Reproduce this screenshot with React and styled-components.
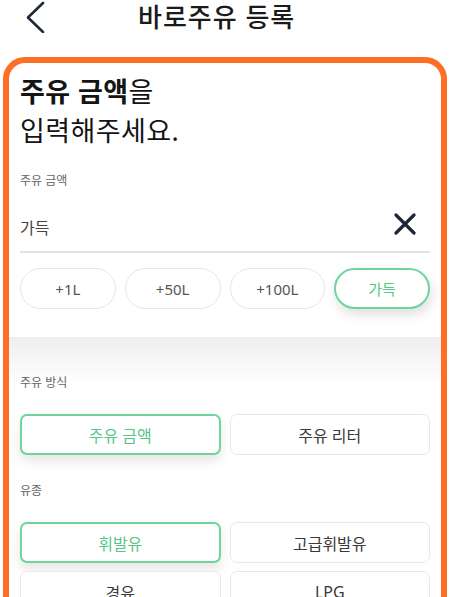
import React, { useState } from 'react'
import styled, { createGlobalStyle } from 'styled-components'

const GlobalStyle = createGlobalStyle`
    * {
        box-sizing: border-box;
    }
    body {
        margin: 0;
        background: #ffffff;
        font-family: "Noto Sans", "Noto Sans CJK KR", sans-serif;
        color: #222;
    }
`

const amountChips = ['+1L', '+50L', '+100L', '가득']
const methods = ['주유 금액', '주유 리터']
const fuels = ['휘발유', '고급휘발유', '경유', 'LPG']

const BackIcon = () => (
    <svg width="20" height="32" viewBox="0 0 20 32" fill="none">
        <polyline points="17,2 2,16.5 17,31" stroke="#1f2a3a" strokeWidth="2.6" strokeLinecap="round" strokeLinejoin="round" />
    </svg>
)

const ClearIcon = () => (
    <svg width="22" height="22" viewBox="0 0 22 22" fill="none">
        <path d="M2 2 L20 20 M20 2 L2 20" stroke="#1c2636" strokeWidth="3.2" strokeLinecap="round" />
    </svg>
)

const App = () => {

    const [chip, setChip] = useState('가득')
    const [method, setMethod] = useState('주유 금액')
    const [fuel, setFuel] = useState('휘발유')

    return (
        <Page>
            <GlobalStyle />
            <Header>
                <BackButton aria-label="back">
                    <BackIcon />
                </BackButton>
                <Title>바로주유 등록</Title>
            </Header>
            <Card>
                <AmountSection>
                    <Headline>
                        <strong>주유 금액</strong>을<br />
                        입력해주세요.
                    </Headline>
                    <Label>주유 금액</Label>
                    <InputRow>
                        <InputValue>{chip}</InputValue>
                        <ClearButton aria-label="clear">
                            <ClearIcon />
                        </ClearButton>
                    </InputRow>
                    <ChipRow>
                        {amountChips.map((c) => (
                            <Chip key={c} $active={chip === c} onClick={() => setChip(c)}>
                                {c}
                            </Chip>
                        ))}
                    </ChipRow>
                </AmountSection>
                <OptionSection>
                    <Label $first>주유 방식</Label>
                    <OptionGrid>
                        {methods.map((m) => (
                            <Option key={m} $active={method === m} onClick={() => setMethod(m)}>
                                {m}
                            </Option>
                        ))}
                    </OptionGrid>
                    <Label $gap>유종</Label>
                    <OptionGrid>
                        {fuels.map((f) => (
                            <Option key={f} $active={fuel === f} onClick={() => setFuel(f)}>
                                {f}
                            </Option>
                        ))}
                    </OptionGrid>
                </OptionSection>
            </Card>
        </Page>
    )
}


const Page = styled.main`
    width: 450px;
    padding: 0 3px;
`

const Header = styled.header`
    height: 57px;
    display: flex;
    align-items: flex-start;
    padding-top: 1px;
    padding-left: 23px;
`

const BackButton = styled.button`
    border: none;
    background: none;
    padding: 0;
    width: 20px;
    height: 32px;
    display: flex;
    cursor: pointer;
`

const Title = styled.h1`
    margin: 0 0 0 92px;
    font-size: 26px;
    line-height: 32px;
    font-weight: 500;
    color: #1a1a1a;
    letter-spacing: 1px;
`

const Card = styled.section`
    border: 6px solid #fd6f22;
    border-radius: 22px;
    overflow: hidden;
    padding-bottom: 60px;
`

const AmountSection = styled.div`
    padding: 9px 11px 28px;
`

const Headline = styled.h2`
    margin: 0;
    font-size: 27px;
    line-height: 39px;
    font-weight: 400;
    letter-spacing: 0.4px;
    color: #141414;

    strong {
        font-weight: 700;
    }
`

const Label = styled.p`
    margin: ${(p) => (p.$first ? '0' : p.$gap ? '28px' : '23px')} 0 0;
    font-size: 12px;
    line-height: 16px;
    color: #666;
`

const InputRow = styled.div`
    margin-top: 17px;
    height: 47px;
    padding: 0 14px 5px 0;
    display: flex;
    align-items: center;
    justify-content: space-between;
    border-bottom: 2px solid #e3e3e3;
`

const InputValue = styled.span`
    font-size: 16px;
    color: #444;
    margin-top: 2px;
`

const ClearButton = styled.button`
    border: none;
    background: none;
    padding: 0;
    display: flex;
    margin-top: -4px;
    cursor: pointer;
`

const ChipRow = styled.div`
    margin-top: 15px;
    display: grid;
    grid-template-columns: repeat(4, 1fr);
    gap: 9px;
`

const Chip = styled.button`
    height: 41px;
    border-radius: 21px;
    background: #fff;
    font-family: "Noto Sans", "Noto Sans CJK KR", sans-serif;
    font-size: 15px;
    font-weight: 400;
    color: ${(p) => (p.$active ? '#55c688' : '#555')};
    border: ${(p) => (p.$active ? '2px solid #6dd49b' : '1.5px solid #e6e6e6')};
    box-shadow: ${(p) => (p.$active ? '2px 6px 12px rgba(0, 0, 0, 0.12)' : 'none')};
    cursor: pointer;
`

const OptionSection = styled.div`
    padding: 38px 11px 0;
    background: linear-gradient(to bottom, #eeeeee 0, #fbfbfb 36px, #ffffff 48px);
`

const OptionGrid = styled.div`
    margin-top: 23px;
    display: grid;
    grid-template-columns: 1fr 1fr;
    gap: 8px 9px;
`

const Option = styled.button`
    height: 41px;
    border-radius: 7px;
    background: #fff;
    font-family: "Noto Sans", "Noto Sans CJK KR", sans-serif;
    font-size: 16px;
    font-weight: 400;
    color: ${(p) => (p.$active ? '#55c688' : '#3a3a3a')};
    border: ${(p) => (p.$active ? '2px solid #6dd49b' : '1.5px solid #e8e8e8')};
    box-shadow: ${(p) => (p.$active ? '0 6px 12px rgba(0, 0, 0, 0.1)' : 'none')};
    cursor: pointer;
`


export default App
